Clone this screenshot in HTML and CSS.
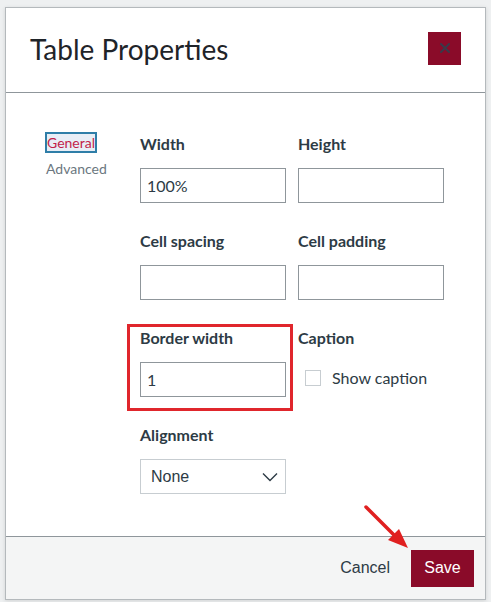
FILE: index.html
```html
<!DOCTYPE html>
<html>
<head>
<meta charset="utf-8">
<link rel="stylesheet" href="styles.css">
</head>
<body>
<div class="dialog">
  <div class="header">
    <h1 class="title">Table Properties</h1>
    <button class="close" aria-label="Close">
      <svg width="12" height="12" viewBox="0 0 12 12"><path d="M2 2 L10 10 M10 2 L2 10" stroke="#3a3a4a" stroke-width="2" stroke-linecap="round"/></svg>
    </button>
  </div>
  <div class="body">
    <div class="tabs">
      <div class="tab active">General</div>
      <div class="tab">Advanced</div>
    </div>
    <div class="form">
      <div class="field">
        <label class="label">Width</label>
        <div class="input">100%</div>
      </div>
      <div class="field">
        <label class="label">Height</label>
        <div class="input"></div>
      </div>
      <div class="field">
        <label class="label">Cell spacing</label>
        <div class="input"></div>
      </div>
      <div class="field">
        <label class="label">Cell padding</label>
        <div class="input"></div>
      </div>
      <div class="field highlighted">
        <label class="label">Border width</label>
        <div class="input">1</div>
        <div class="callout"></div>
      </div>
      <div class="field">
        <label class="label">Caption</label>
        <div class="check-row">
          <span class="checkbox"></span>
          <span class="check-label">Show caption</span>
        </div>
      </div>
      <div class="field">
        <label class="label">Alignment</label>
        <div class="select">
          <span>None</span>
          <svg width="16" height="10" viewBox="0 0 16 10"><path d="M1 1.5 L8 8.5 L15 1.5" fill="none" stroke="#2d3b45" stroke-width="1.4"/></svg>
        </div>
      </div>
    </div>
  </div>
  <div class="footer">
    <button class="cancel">Cancel</button>
    <button class="save">Save</button>
    <svg class="arrow" width="50" height="50" viewBox="0 0 50 50">
      <path d="M4 4 L34 34" stroke="#e02020" stroke-width="3.5" stroke-linecap="round"/>
      <path d="M46 45 L26 37 L37 26 Z" fill="#e02020"/>
    </svg>
  </div>
</div>
</body>
</html>
```
FILE: styles.css
```css
html, body {
  margin: 0;
  padding: 0;
}
body {
  background: #eef0f1;
  font-family: Lato, "Noto Sans", sans-serif;
  color: #2d3b45;
  padding: 7px 5px 2px 5px;
  height: 602px;
  box-sizing: border-box;
}
.dialog {
  width: 481px;
  height: 593px;
  box-sizing: border-box;
  background: #fff;
  border: 1px solid #b4b9bc;
  box-shadow: 0 1px 4px rgba(0,0,0,0.12);
  display: flex;
  flex-direction: column;
}
.header {
  height: 85px;
  box-sizing: border-box;
  border-bottom: 1px solid #8f969b;
  display: flex;
  align-items: center;
  justify-content: space-between;
  padding: 0 24px 0 24px;
}
.title {
  margin: 0;
  font-weight: 400;
  font-size: 28px;
  color: #1f2429;
  letter-spacing: 0;
  position: relative;
  top: -1px;
}
.close {
  width: 33px;
  height: 33px;
  border: 0;
  background: #8a0b29;
  padding: 0;
  display: flex;
  align-items: center;
  justify-content: center;
  position: relative;
  top: -2px;
}
.body {
  flex: 1;
  display: flex;
  padding: 41px 0 0 39px;
}
.tabs {
  width: 95px;
  display: flex;
  flex-direction: column;
  gap: 7px;
  margin-top: -2px;
}
.tab {
  font-size: 14px;
  color: #6b7780;
  line-height: 17px;
  align-self: flex-start;
  padding: 0 1px;
}
.tab.active {
  color: #c21e4a;
  background: #e8eef6;
  border: 2px solid #2f7ea8;
  line-height: 17px;
  padding: 0;
}
.form {
  display: grid;
  grid-template-columns: 146px 146px;
  column-gap: 12px;
  row-gap: 28px;
  align-content: start;
}
.field {
  display: flex;
  flex-direction: column;
  gap: 14px;
  position: relative;
}
.label {
  font-weight: 700;
  font-size: 16px;
  line-height: 20px;
  height: 20px;
  color: #2d3b45;
}
.input {
  height: 35px;
  box-sizing: border-box;
  border: 1px solid #8f969b;
  font-size: 16px;
  padding: 0 6px;
  display: flex;
  align-items: center;
  color: #2d3b45;
}
.callout {
  position: absolute;
  left: -13px;
  top: -4px;
  width: 166px;
  height: 87px;
  box-sizing: border-box;
  border: 3px solid #e0262c;
}
.check-row {
  height: 35px;
  display: flex;
  align-items: center;
  padding-left: 7px;
  gap: 11px;
  margin-top: -2px;
}
.checkbox {
  width: 16px;
  height: 16px;
  box-sizing: border-box;
  border: 1px solid #c7cdd1;
  background: #fff;
}
.check-label {
  font-size: 16px;
  color: #2d3b45;
}
.select {
  height: 35px;
  box-sizing: border-box;
  border: 1px solid #c7cdd1;
  display: flex;
  align-items: center;
  justify-content: space-between;
  padding: 0 7px 0 10px;
  font-family: "Liberation Sans", Arial, sans-serif;
  font-size: 16px;
  color: #2d3b45;
}
.footer {
  height: 63px;
  box-sizing: border-box;
  background: #f4f5f5;
  border-top: 1px solid #8f969b;
  display: flex;
  align-items: center;
  justify-content: flex-end;
  padding: 0 11px 0 0;
  position: relative;
}
.cancel {
  background: none;
  border: 0;
  font-family: "Liberation Sans", Arial, sans-serif;
  font-size: 16px;
  color: #2d3b45;
  padding: 0;
  margin-right: 21px;
}
.save {
  width: 63px;
  height: 37px;
  border: 0;
  background: #8a0b29;
  color: #fff;
  font-family: "Liberation Sans", Arial, sans-serif;
  font-size: 16px;
  padding: 0;
}
.arrow {
  position: absolute;
  left: 356px;
  top: -34px;
}
```
